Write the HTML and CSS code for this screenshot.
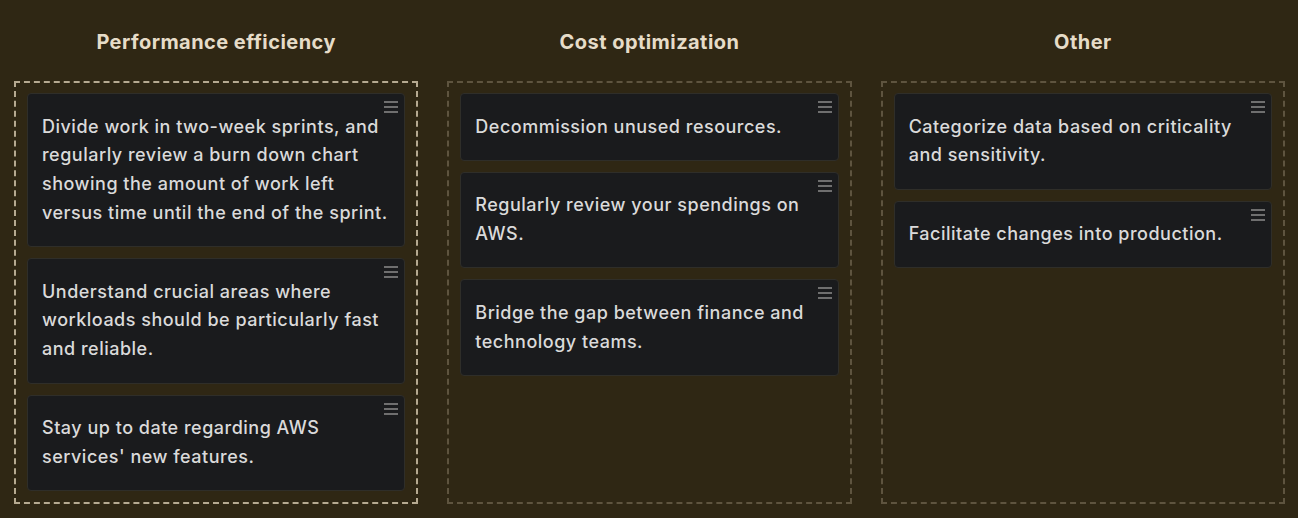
FILE: index.html
```html
<!DOCTYPE html>
<html lang="en">
<head>
<meta charset="utf-8">
<title>Board</title>
<link rel="stylesheet" href="styles.css">
</head>
<body>
<main class="board">
  <section class="column">
    <h2 class="column-title">Performance efficiency</h2>
    <div class="dropzone active">
      <article class="card"><p>Divide work in two-week sprints, and regularly review a burn down chart showing the amount of work left versus time until the end of the sprint.</p><span class="handle"><i></i><i></i><i></i></span></article>
      <article class="card"><p>Understand crucial areas where workloads should be particularly fast and reliable.</p><span class="handle"><i></i><i></i><i></i></span></article>
      <article class="card"><p>Stay up to date regarding AWS services' new features.</p><span class="handle"><i></i><i></i><i></i></span></article>
    </div>
  </section>
  <section class="column">
    <h2 class="column-title">Cost optimization</h2>
    <div class="dropzone">
      <article class="card"><p>Decommission unused resources.</p><span class="handle"><i></i><i></i><i></i></span></article>
      <article class="card"><p>Regularly review your spendings on AWS.</p><span class="handle"><i></i><i></i><i></i></span></article>
      <article class="card"><p>Bridge the gap between finance and technology teams.</p><span class="handle"><i></i><i></i><i></i></span></article>
    </div>
  </section>
  <section class="column">
    <h2 class="column-title">Other</h2>
    <div class="dropzone">
      <article class="card"><p>Categorize data based on criticality and sensitivity.</p><span class="handle"><i></i><i></i><i></i></span></article>
      <article class="card"><p>Facilitate changes into production.</p><span class="handle"><i></i><i></i><i></i></span></article>
    </div>
  </section>
</main>
</body>
</html>
```
FILE: styles.css
```css
html, body {
  margin: 0;
  padding: 0;
  background: #2f2714;
  height: 100%;
}
body {
  font-family: Inter, "Noto Sans", sans-serif;
}
.board {
  display: grid;
  grid-template-columns: repeat(3, 1fr);
  column-gap: 29px;
  padding: 0 13px 0 14px;
  height: 518px;
  box-sizing: border-box;
}
.column {
  display: flex;
  flex-direction: column;
}
.column-title {
  margin: 28px 0 25px;
  text-align: center;
  font-size: 20px;
  line-height: 28px;
  font-weight: 700;
  letter-spacing: 0.45px;
  color: #e6dcc8;
}
.dropzone {
  height: 423px;
  box-sizing: border-box;
  border: 2px dashed #5e543f;
  padding: 10px 11px;
  display: flex;
  flex-direction: column;
  gap: 11px;
}
.dropzone.active {
  border-color: #b6aa91;
}
.card {
  position: relative;
  background: #1a1b1d;
  border: 1px solid #2f2e29;
  border-radius: 4px;
  padding: 18.5px 14px;
}
.card p {
  margin: 0;
  font-size: 18px;
  line-height: 28.8px;
  font-weight: 500;
  letter-spacing: 0.5px;
  color: #dadada;
}
.handle {
  position: absolute;
  top: 7px;
  right: 6px;
  width: 14px;
  display: flex;
  flex-direction: column;
  gap: 3px;
}
.handle i {
  display: block;
  height: 2px;
  background: #6f6f6f;
}
```
